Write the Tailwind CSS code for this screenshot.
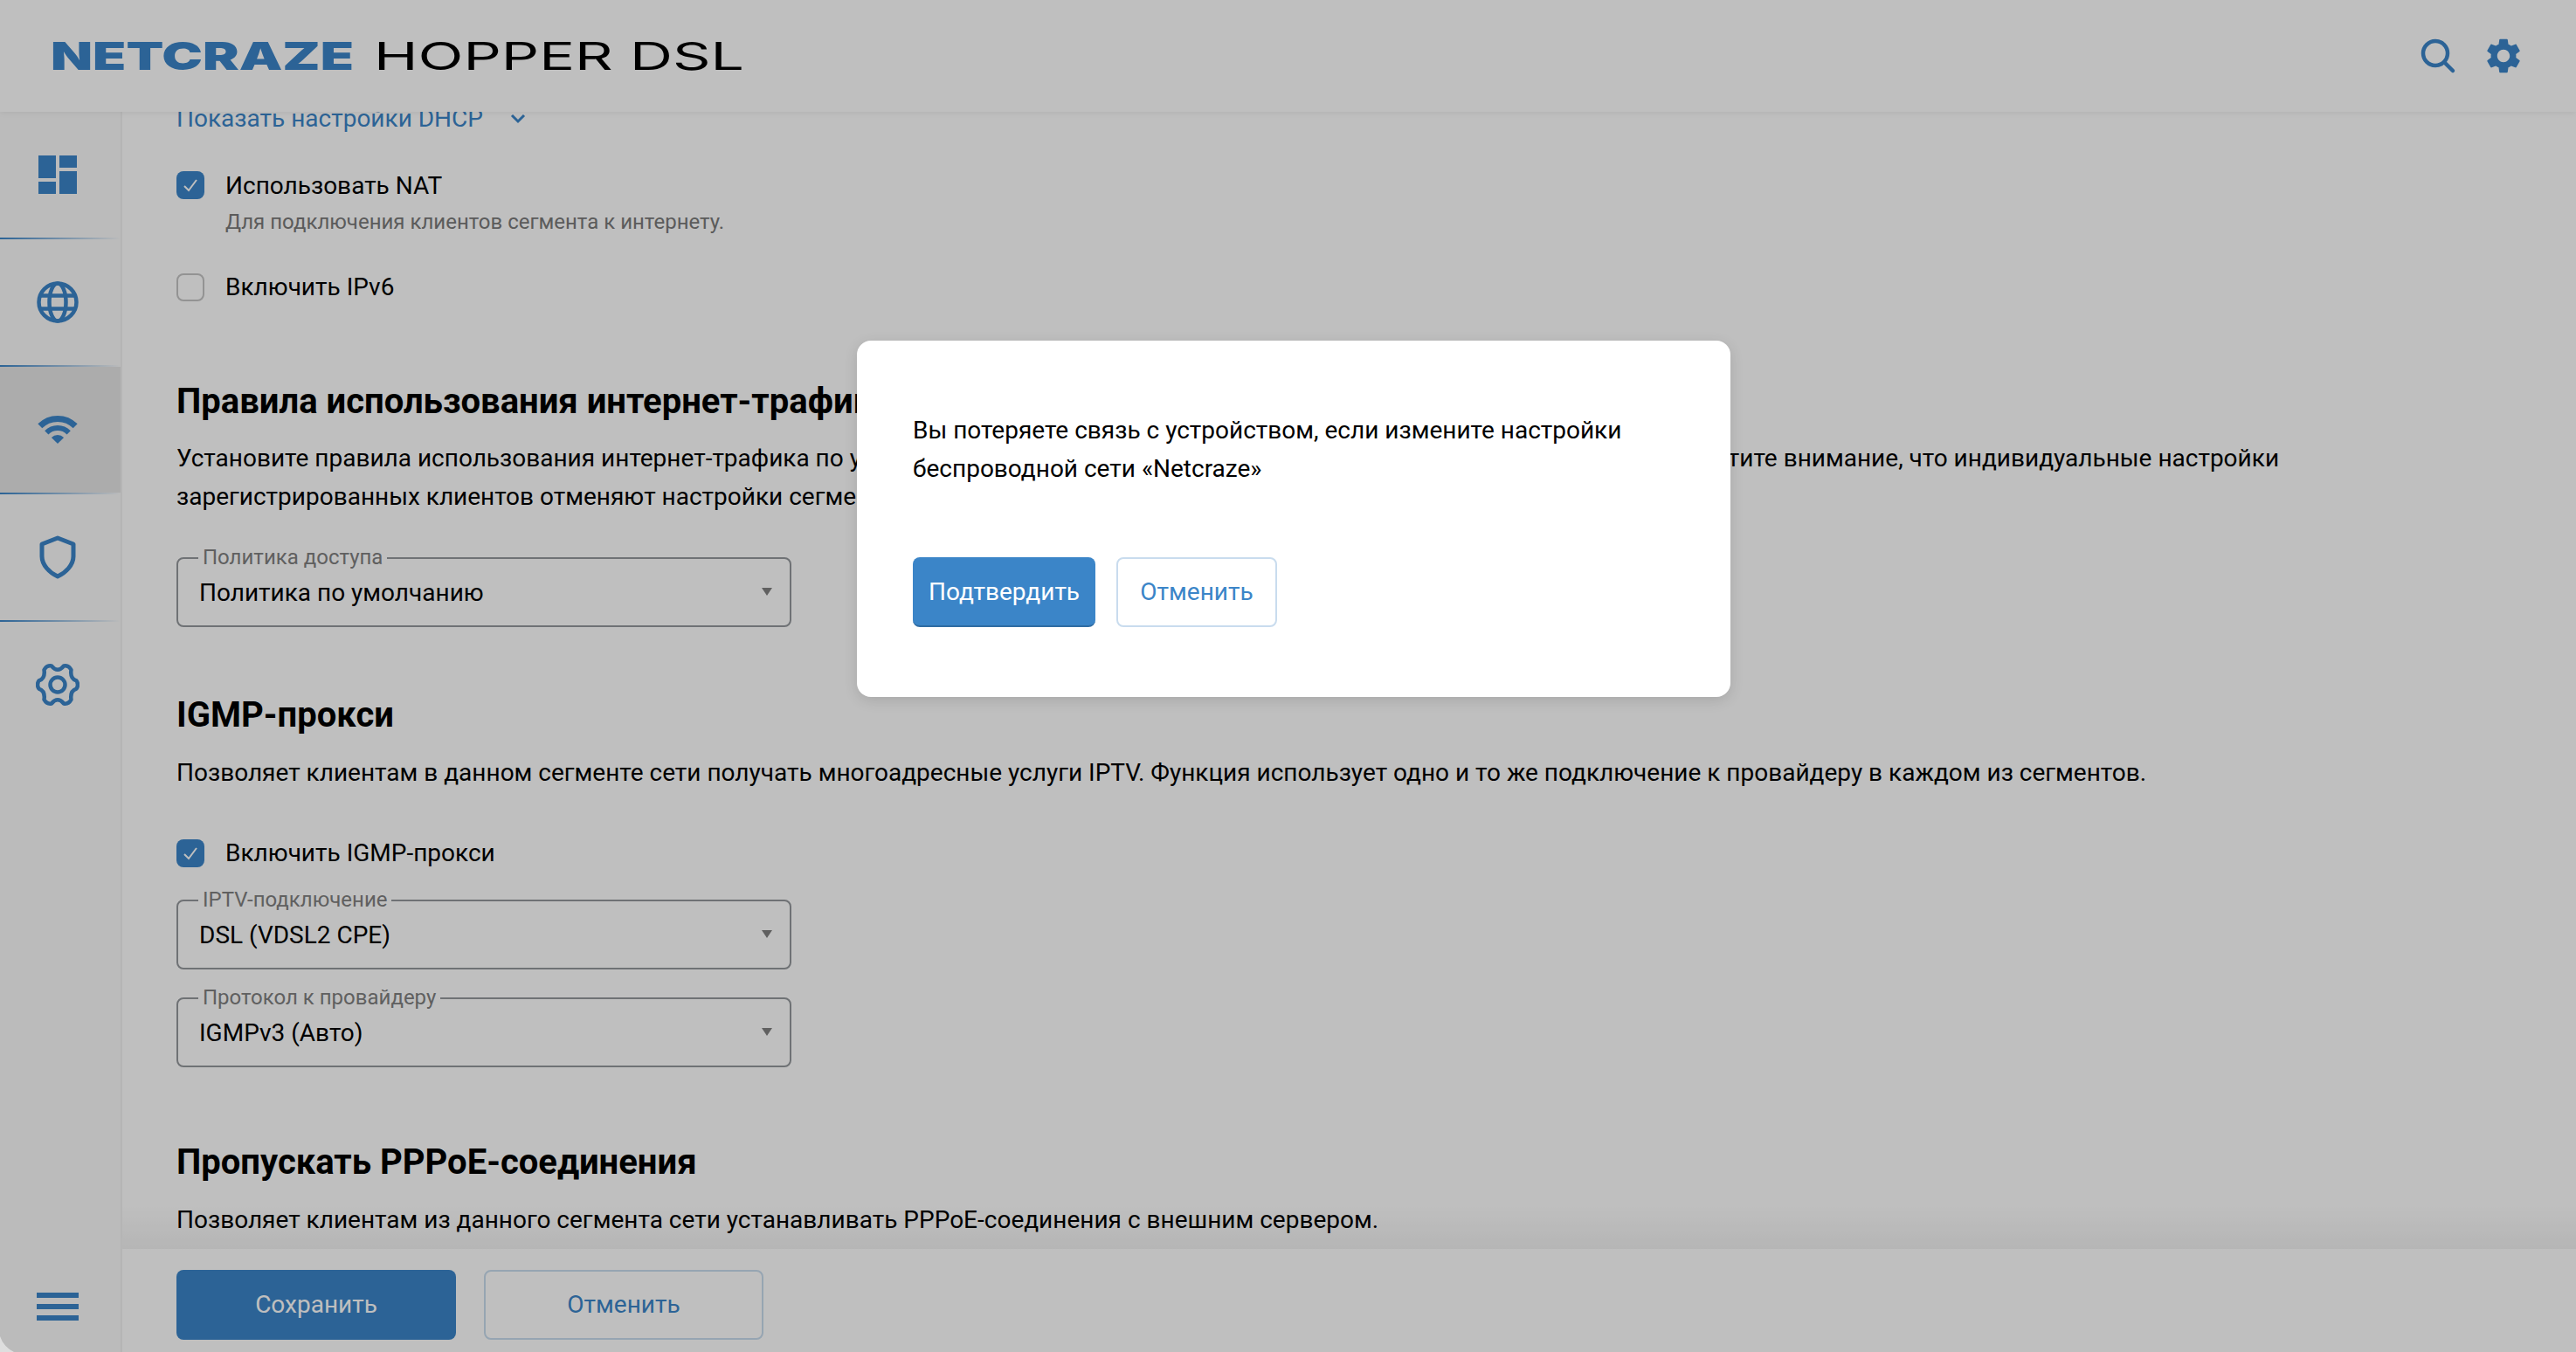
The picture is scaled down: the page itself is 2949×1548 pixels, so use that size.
<!DOCTYPE html>
<html lang="ru">
<head>
<meta charset="utf-8">
<title>Netcraze Hopper DSL</title>
<script src="https://cdn.jsdelivr.net/npm/@tailwindcss/browser@4"></script>
</head>
<body class="m-0 overflow-hidden bg-white font-['Roboto',sans-serif] text-black">
<div class="relative flex h-[1548px] w-[2949px] flex-col overflow-hidden bg-white">
  <header class="relative z-20 flex h-[128px] shrink-0 items-center justify-between bg-white pl-[58px] pr-[59px] shadow-[0_2px_6px_rgba(0,0,0,0.06)]">
    <svg width="800" height="44" viewBox="0 0 800 44" class="block">
      <text x="0" y="38" textLength="347" lengthAdjust="spacingAndGlyphs" font-family="Inter" font-weight="900" font-size="44" fill="#3b85c8">NETCRAZE</text>
      <text x="370" y="38" textLength="424" lengthAdjust="spacingAndGlyphs" font-family="Inter" font-weight="400" font-size="44" fill="#000">HOPPER DSL</text>
    </svg>
    <div class="flex items-center gap-[28px]">
      <svg width="48" height="48" viewBox="0 0 48 48" fill="none" stroke="#3b85c8" stroke-width="4.5" stroke-linecap="round"><circle cx="22" cy="21" r="14"/><path d="M33 32l9 9"/></svg>
      <svg width="48" height="48" viewBox="0 0 24 24" fill="#3b85c8"><path d="M19.14,12.94c0.04-0.3,0.06-0.61,0.06-0.94c0-0.32-0.02-0.64-0.07-0.94l2.03-1.58c0.18-0.14,0.23-0.41,0.12-0.61 l-1.92-3.32c-0.12-0.22-0.37-0.29-0.59-0.22l-2.39,0.96c-0.5-0.38-1.03-0.7-1.62-0.94L14.4,2.81c-0.04-0.24-0.24-0.41-0.48-0.41 h-3.84c-0.24,0-0.43,0.17-0.47,0.41L9.25,5.35C8.66,5.59,8.12,5.92,7.63,6.29L5.24,5.33c-0.22-0.08-0.47,0-0.59,0.22L2.74,8.87 C2.62,9.08,2.66,9.34,2.86,9.48l2.03,1.58C4.84,11.36,4.8,11.69,4.8,12s0.02,0.64,0.07,0.94l-2.03,1.58 c-0.18,0.14-0.23,0.41-0.12,0.61l1.92,3.32c0.12,0.22,0.37,0.29,0.59,0.22l2.39-0.96c0.5,0.38,1.03,0.7,1.62,0.94l0.36,2.54 c0.05,0.24,0.24,0.41,0.48,0.41h3.84c0.24,0,0.44-0.17,0.47-0.41l0.36-2.54c0.59-0.24,1.13-0.56,1.62-0.94l2.39,0.96 c0.22,0.08,0.47,0,0.59-0.22l1.92-3.32c0.12-0.22,0.07-0.47-0.12-0.61L19.14,12.94z M12,15.6c-1.98,0-3.6-1.62-3.6-3.6 s1.62-3.6,3.6-3.6s3.6,1.62,3.6,3.6S13.98,15.6,12,15.6z"/></svg>
    </div>
  </header>

  <div class="flex min-h-0 flex-1">
    <nav class="flex w-[140px] shrink-0 flex-col border-r-2 border-[#f2f2f2] bg-[#fafafa]">
      <div class="flex h-[144px] items-center justify-center pr-[6px]">
        <svg width="44" height="44" viewBox="0 0 44 44" fill="#3b85c8"><path d="M0 0h20v26H0zM24 0h20v14H24zM24 18h20v26H24zM0 30h20v14H0z"/></svg>
      </div>
      <div class="h-[2px] bg-gradient-to-r from-[#3b85c8] to-transparent"></div>
      <div class="flex h-[144px] items-center justify-center pr-[6px]">
        <svg width="48" height="48" viewBox="0 0 48 48" fill="none" stroke="#3b85c8" stroke-width="4.5"><circle cx="24" cy="24" r="21.5"/><ellipse cx="24" cy="24" rx="9.5" ry="21.5"/><path d="M4 16.5h40M4 31.5h40"/></svg>
      </div>
      <div class="h-[2px] bg-gradient-to-r from-[#3b85c8] to-transparent"></div>
      <div class="flex h-[144px] items-center justify-center bg-[#e6e6e6] pr-[6px]">
        <svg width="48" height="34" viewBox="0 0 48 34" fill="#3b85c8"><path d="M24 33L16.9 25.9A10 10 0 0 1 31.1 25.9Z"/><path d="M11.3 20.3A18 18 0 0 1 36.7 20.3" fill="none" stroke="#3b85c8" stroke-width="6"/><path d="M3.8 12.8A28.5 28.5 0 0 1 44.2 12.8" fill="none" stroke="#3b85c8" stroke-width="7"/></svg>
      </div>
      <div class="h-[2px] bg-gradient-to-r from-[#3b85c8] to-transparent"></div>
      <div class="flex h-[144px] items-center justify-center pr-[6px]">
        <svg width="44" height="50" viewBox="0 0 44 50" fill="none" stroke="#3b85c8" stroke-width="5" stroke-linejoin="round"><path d="M22 3L40 10V24C40 34 31 43 22 47C13 43 4 34 4 24V10Z"/></svg>
      </div>
      <div class="h-[2px] bg-gradient-to-r from-[#3b85c8] to-transparent"></div>
      <div class="flex h-[144px] items-center justify-center pr-[6px]">
        <svg width="50" height="50" viewBox="-25 -25 50 50" fill="none" stroke="#3b85c8" stroke-width="4.5" stroke-linejoin="round"><path d="M7 -21.5Q12.5 -22.5 15.5 -17Q14 -7 21.5 -4.6Q24.5 0 21.5 4.6Q14 7 15.5 17Q12.5 22.5 7 21.5Q0 13 -7 21.5Q-12.5 22.5 -15.5 17Q-14 7 -21.5 4.6Q-24.5 0 -21.5 -4.6Q-14 -7 -15.5 -17Q-12.5 -22.5 -7 -21.5Q0 -13 7 -21.5Z"/><circle r="8.5"/></svg>
      </div>
    </nav>

    <main class="relative min-w-0 flex-1 overflow-hidden pl-[62px]">
      <div class="mt-[-14px] flex h-[44px] items-center gap-[30px] text-[28px] leading-[44px] text-[#3b85c8]">
        <span>Показать настройки DHCP</span>
        <svg width="20" height="12" viewBox="0 0 20 12" fill="none" stroke="#3b85c8" stroke-width="3"><path d="M3 2l7 7 7-7"/></svg>
      </div>

      <div class="mt-[38px] flex items-start gap-[24px]">
        <span class="flex size-[32px] items-center justify-center rounded-[8px] bg-[#3b85c8]"><svg width="20" height="18" viewBox="0 0 20 18" fill="none" stroke="#fff" stroke-width="2"><path d="M3 10l5 5L17 3"/></svg></span>
        <div>
          <div class="pt-[1px] text-[28px] leading-[32px]">Использовать NAT</div>
          <div class="mt-[9px] text-[24px] leading-[32px] text-[#7a7a7a]">Для подключения клиентов сегмента к интернету.</div>
        </div>
      </div>

      <div class="mt-[42px] flex items-center gap-[24px]">
        <span class="size-[32px] rounded-[8px] border-2 border-[#c4c4c4]"></span>
        <span class="pt-[1px] text-[28px] leading-[32px]">Включить IPv6</span>
      </div>

      <h2 class="mt-[90px] text-[40px] font-bold leading-[50px]">Правила использования интернет-трафика по умолчанию</h2>
      <p class="mt-[18px] whitespace-nowrap text-[28px] leading-[44px]">Установите правила использования интернет-трафика по умолчанию для незарегистрированных клиентов этого сегмента сети. Обратите внимание, что индивидуальные настройки<br>зарегистрированных клиентов отменяют настройки сегмента.</p>

      <div class="relative mt-[47px] flex h-[80px] w-[704px] items-center justify-between rounded-[8px] border-2 border-[#94989c] pl-[24px] pr-[20px] pt-[2px]">
        <span class="absolute left-[23px] top-[-17px] bg-white px-[5px] text-[24px] leading-[30px] text-[#808080]">Политика доступа</span>
        <span class="text-[28px]">Политика по умолчанию</span>
        <span class="mb-[4px] h-0 w-0 border-x-[6px] border-t-[9px] border-x-transparent border-t-[#808080]"></span>
      </div>

      <h2 class="mt-[76px] text-[40px] font-bold leading-[50px]">IGMP-прокси</h2>
      <p class="mt-[19px] text-[28px] leading-[44px]">Позволяет клиентам в данном сегменте сети получать многоадресные услуги IPTV. Функция использует одно и то же подключение к провайдеру в каждом из сегментов.</p>

      <div class="mt-[54px] flex items-center gap-[24px]">
        <span class="flex size-[32px] items-center justify-center rounded-[8px] bg-[#3b85c8]"><svg width="20" height="18" viewBox="0 0 20 18" fill="none" stroke="#fff" stroke-width="2"><path d="M3 10l5 5L17 3"/></svg></span>
        <span class="text-[28px] leading-[32px]">Включить IGMP-прокси</span>
      </div>

      <div class="relative mt-[37px] flex h-[80px] w-[704px] items-center justify-between rounded-[8px] border-2 border-[#94989c] pl-[24px] pr-[20px] pt-[2px]">
        <span class="absolute left-[23px] top-[-17px] bg-white px-[5px] text-[24px] leading-[30px] text-[#808080]">IPTV-подключение</span>
        <span class="text-[28px]">DSL (VDSL2 CPE)</span>
        <span class="mb-[4px] h-0 w-0 border-x-[6px] border-t-[9px] border-x-transparent border-t-[#808080]"></span>
      </div>
      <div class="relative mt-[32px] flex h-[80px] w-[704px] items-center justify-between rounded-[8px] border-2 border-[#94989c] pl-[24px] pr-[20px] pt-[2px]">
        <span class="absolute left-[23px] top-[-17px] bg-white px-[5px] text-[24px] leading-[30px] text-[#808080]">Протокол к провайдеру</span>
        <span class="text-[28px]">IGMPv3 (Авто)</span>
        <span class="mb-[4px] h-0 w-0 border-x-[6px] border-t-[9px] border-x-transparent border-t-[#808080]"></span>
      </div>

      <h2 class="mt-[84px] text-[40px] font-bold leading-[50px]">Пропускать PPPoE-соединения</h2>
      <p class="mt-[19px] text-[28px] leading-[44px]">Позволяет клиентам из данного сегмента сети устанавливать PPPoE-соединения с внешним сервером.</p>
      <div class="pointer-events-none absolute inset-x-0 bottom-0 h-[50px] bg-gradient-to-b from-transparent to-black/5"></div>
    </main>
  </div>

  <footer class="relative z-10 flex h-[118px] shrink-0 bg-white">
    <div class="flex w-[140px] shrink-0 flex-col items-center justify-center gap-[7px] border-r-2 border-[#f2f2f2] bg-[#fafafa] pr-[6px] pt-[14px]">
      <span class="h-[6px] w-[48px] bg-[#3b85c8]"></span>
      <span class="h-[6px] w-[48px] bg-[#3b85c8]"></span>
      <span class="h-[6px] w-[48px] bg-[#3b85c8]"></span>
    </div>
    <div class="flex gap-[32px] pl-[62px] pt-[24px]">
      <button class="h-[80px] w-[320px] rounded-[8px] bg-[#3b85c8] text-[28px] text-white">Сохранить</button>
      <button class="h-[80px] w-[320px] rounded-[8px] border-2 border-[#c9dcee] bg-white text-[28px] text-[#3b85c8]">Отменить</button>
    </div>
  </footer>

  <div class="absolute inset-0 z-30 flex items-start justify-center bg-black/25 pl-[13px] pt-[390px]">
    <div class="h-[408px] w-[1000px] rounded-[16px] bg-white px-[64px] pt-[81px] shadow-[0_4px_16px_rgba(0,0,0,0.12)]">
      <p class="text-[28px] leading-[44px]">Вы потеряете связь с устройством, если измените настройки<br>беспроводной сети «Netcraze»</p>
      <div class="mt-[79px] flex gap-[24px]">
        <button class="h-[80px] w-[209px] rounded-[8px] border-b-2 border-[#2f6ca3] bg-[#3b85c8] pt-[2px] text-[28px] text-white">Подтвердить</button>
        <button class="h-[80px] w-[184px] rounded-[8px] border-2 border-[#c9dcee] bg-white text-[28px] text-[#3b85c8]">Отменить</button>
      </div>
    </div>
  </div>
  <svg class="absolute bottom-0 left-0 z-40" width="16" height="18" viewBox="0 0 16 18" fill="#dedede"><path d="M0 0Q4 12 16 18H0Z"/></svg>
</div>
</body>
</html>
